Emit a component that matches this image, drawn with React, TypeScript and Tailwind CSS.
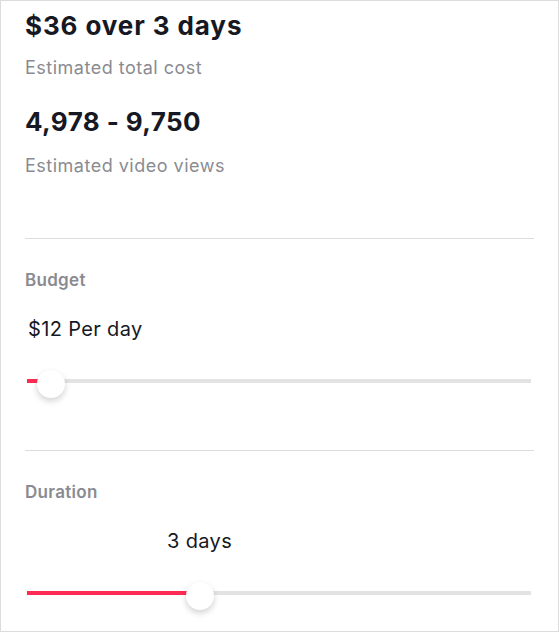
import React from 'react';

const FONT = { fontFamily: 'Inter, "Noto Sans", sans-serif' };

interface SliderProps {
  label: string;
  value: number; // thumb center from track start, px
  labelOffset: number;
}

function Slider({ label, value, labelOffset }: SliderProps) {
  return (
    <div>
      <p
        className="text-[20px] leading-[28px] text-[#161823] tracking-[0.35px]"
        style={{ marginLeft: labelOffset }}
      >
        {label}
      </p>
      <div className="relative mt-[26px] h-[28px] mx-[2px]">
        <div className="absolute left-0 right-[1px] top-[10px] h-[4px] bg-[#e3e3e4]" />
        <div
          className="absolute left-0 top-[10px] h-[4px] bg-[#fe2c55]"
          style={{ width: value }}
        />
        <div
          className="absolute top-[1px] w-[28px] h-[28px] rounded-full bg-white shadow-[0_3px_6px_rgba(0,0,0,0.18)]"
          style={{ left: value - 14 }}
        />
      </div>
    </div>
  );
}

export default function App() {
  return (
    <div
      className="w-[559px] h-[632px] bg-white border border-[#dcdcdc] px-6 pt-[9px] overflow-hidden"
      style={FONT}
    >
      <h1 className="text-[26px] leading-[32px] font-bold text-[#161823] tracking-[0.9px]">
        $36 over 3 days
      </h1>
      <p className="mt-[14px] text-[18px] leading-[24px] text-[#8a8b91] tracking-[0.5px]">
        Estimated total cost
      </p>
      <h2 className="mt-[26px] text-[26px] leading-[32px] font-bold text-[#161823] tracking-[0.4px]">
        4,978 - 9,750
      </h2>
      <p className="mt-[16px] text-[18px] leading-[24px] text-[#8a8b91] tracking-[0.5px]">
        Estimated video views
      </p>

      <div className="mt-[60px] h-px bg-[#dcdcdc]" />
      <p className="mt-[29px] text-[17px] leading-[24px] font-semibold text-[#8a8b91] tracking-[0.3px]">
        Budget
      </p>
      <div className="mt-[23px]">
        <Slider label="$12 Per day" value={24} labelOffset={3} />
      </div>

      <div className="mt-[53px] h-px bg-[#dcdcdc]" />
      <p className="mt-[29px] text-[17px] leading-[24px] font-semibold text-[#8a8b91] tracking-[0.3px]">
        Duration
      </p>
      <div className="mt-[23px]">
        <Slider label="3 days" value={173} labelOffset={142} />
      </div>
    </div>
  );
}
